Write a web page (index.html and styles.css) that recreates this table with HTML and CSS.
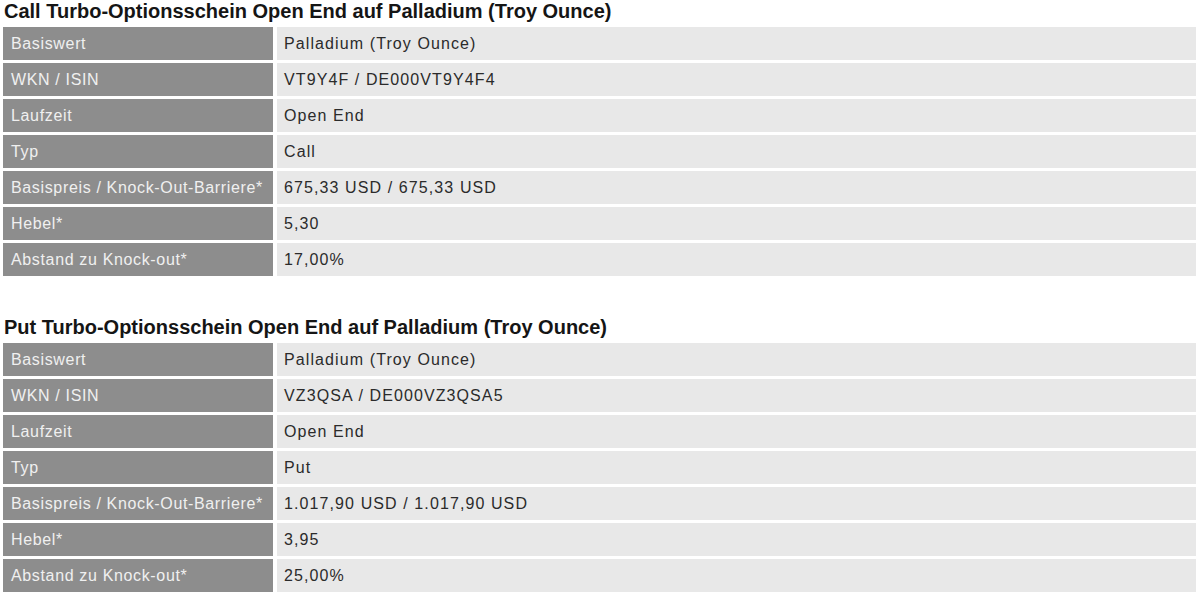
FILE: index.html
```html
<!DOCTYPE html>
<html lang="de">
<head>
<meta charset="utf-8">
<title>Turbo-Optionsscheine Palladium</title>
<link rel="stylesheet" href="styles.css">
</head>
<body>
<div class="page">
  <section class="product">
    <h2 class="title">Call Turbo-Optionsschein Open End auf Palladium (Troy Ounce)</h2>
    <div class="table">
      <div class="label">Basiswert</div><div class="value">Palladium (Troy Ounce)</div>
      <div class="label">WKN / ISIN</div><div class="value">VT9Y4F / DE000VT9Y4F4</div>
      <div class="label">Laufzeit</div><div class="value">Open End</div>
      <div class="label">Typ</div><div class="value">Call</div>
      <div class="label">Basispreis / Knock-Out-Barriere*</div><div class="value">675,33 USD / 675,33 USD</div>
      <div class="label">Hebel*</div><div class="value">5,30</div>
      <div class="label">Abstand zu Knock-out*</div><div class="value">17,00%</div>
    </div>
  </section>
  <section class="product">
    <h2 class="title">Put Turbo-Optionsschein Open End auf Palladium (Troy Ounce)</h2>
    <div class="table">
      <div class="label">Basiswert</div><div class="value">Palladium (Troy Ounce)</div>
      <div class="label">WKN / ISIN</div><div class="value">VZ3QSA / DE000VZ3QSA5</div>
      <div class="label">Laufzeit</div><div class="value">Open End</div>
      <div class="label">Typ</div><div class="value">Put</div>
      <div class="label">Basispreis / Knock-Out-Barriere*</div><div class="value">1.017,90 USD / 1.017,90 USD</div>
      <div class="label">Hebel*</div><div class="value">3,95</div>
      <div class="label">Abstand zu Knock-out*</div><div class="value">25,00%</div>
    </div>
  </section>
</div>
</body>
</html>
```
FILE: styles.css
```css
html, body {
  margin: 0;
  padding: 0;
  background: #ffffff;
}
.page {
  padding: 0 4px 0 3px;
  font-family: "Liberation Sans", Arial, sans-serif;
  display: flex;
  flex-direction: column;
  gap: 40px;
}
.title {
  margin: 0;
  padding-left: 1px;
  font-size: 20px;
  line-height: 22px;
  font-weight: bold;
  color: #151515;
}
.table {
  display: grid;
  grid-template-columns: 270px 1fr;
  grid-auto-rows: 33px;
  column-gap: 4px;
  row-gap: 3px;
  margin-top: 5px;
}
.label, .value {
  display: flex;
  align-items: center;
  font-size: 16px;
}
.label {
  background: #8d8d8d;
  color: #f0f0f0;
  padding-left: 8px;
  letter-spacing: 0.65px;
}
.value {
  background: #e8e8e8;
  color: #2b2b2b;
  padding-left: 7px;
  letter-spacing: 1.1px;
}
```
